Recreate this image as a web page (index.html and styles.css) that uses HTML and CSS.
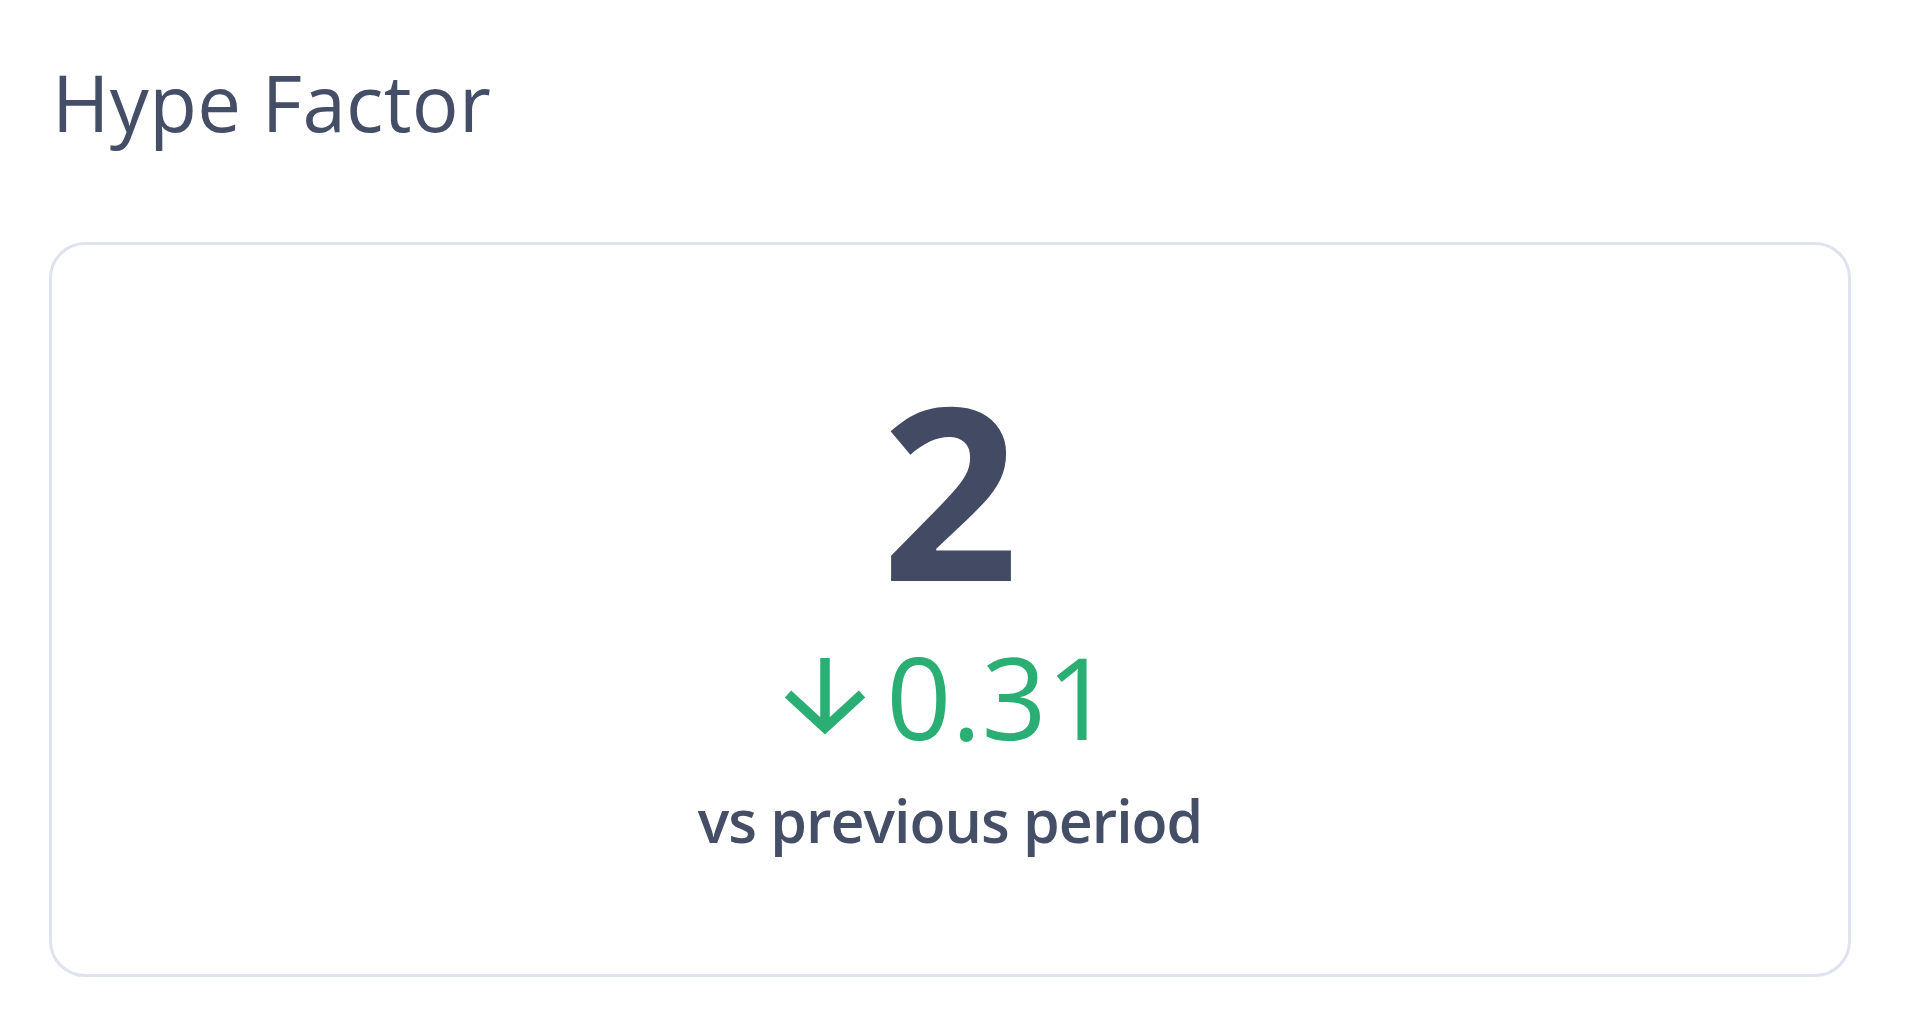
FILE: index.html
```html
<!DOCTYPE html>
<html lang="en">
<head>
<meta charset="utf-8">
<title>Hype Factor</title>
<link rel="stylesheet" href="styles.css">
</head>
<body>
<div class="widget">
  <h2 class="title">Hype Factor</h2>
  <div class="card">
    <div class="value">2</div>
    <div class="delta">
      <svg class="arrow" width="84" height="84" viewBox="0 0 84 84" aria-hidden="true">
        <path d="M42 2 V70 M5 38 L42 72 L79 38" fill="none" stroke="currentColor" stroke-width="9.5" stroke-linejoin="miter"/>
      </svg>
      <span class="delta-num">0.31</span>
    </div>
    <div class="caption">vs previous period</div>
  </div>
</div>
</body>
</html>
```
FILE: styles.css
```css
html, body {
  margin: 0;
  padding: 0;
  background: #ffffff;
}
body {
  font-family: "Open Sans", "Noto Sans", sans-serif;
  color: #444d66;
}
.widget {
  padding: 63px 69px 0 49px;
}
.title {
  margin: 0 0 0 3px;
  font-size: 78px;
  font-weight: 400;
  line-height: 78px;
  letter-spacing: 0.3px;
  color: #454e67;
}
.card {
  margin-top: 101px;
  border: 3px solid #dfe3ef;
  border-radius: 36px;
  padding: 123px 0 124px;
  display: flex;
  flex-direction: column;
  align-items: center;
}
.value {
  font-size: 240px;
  font-weight: 700;
  line-height: 240px;
  color: #424b63;
}
.delta {
  margin-top: 31px;
  display: flex;
  align-items: flex-start;
  gap: 19px;
  color: #2aae73;
  margin-right: 5px;
}
.arrow {
  margin-top: 17px;
  display: block;
}
.delta-num {
  font-size: 114px;
  line-height: 114px;
  font-weight: 400;
}
.caption {
  margin-top: 38px;
  font-size: 59px;
  line-height: 59px;
  font-weight: 600;
  letter-spacing: -1px;
  color: #454e67;
}
```
